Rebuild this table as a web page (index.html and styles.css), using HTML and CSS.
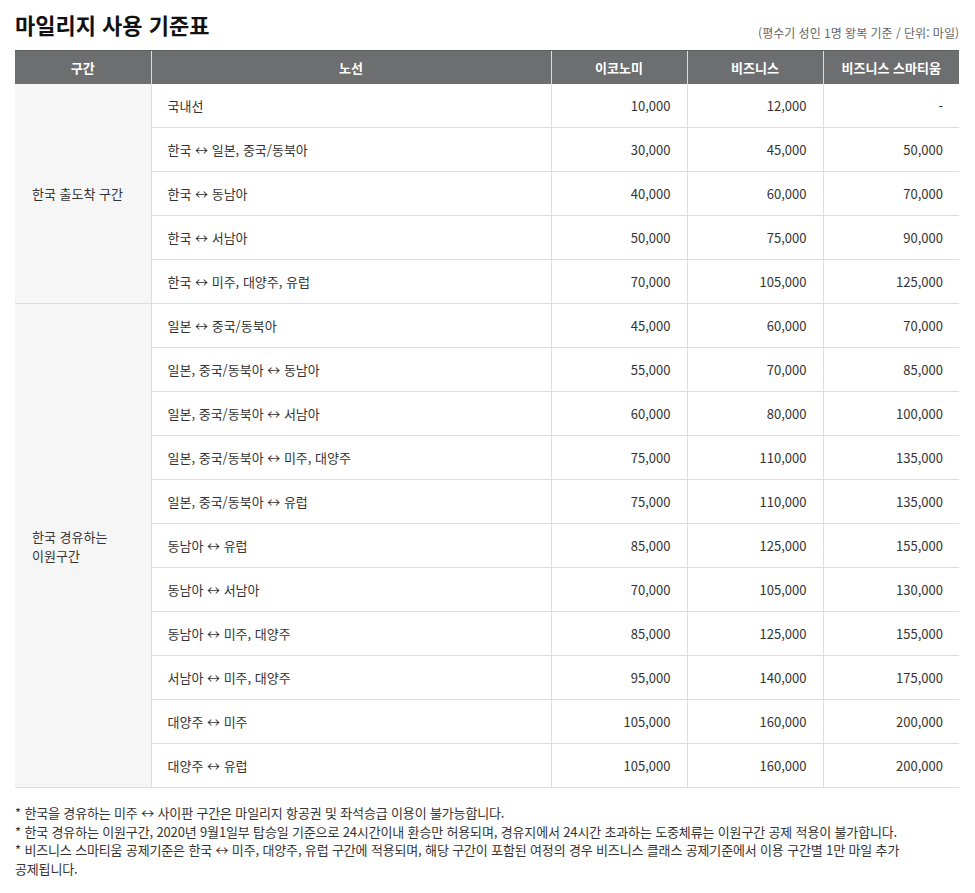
FILE: index.html
```html
<!DOCTYPE html>
<html lang="ko">
<head>
<meta charset="utf-8">
<link rel="stylesheet" href="styles.css">
</head>
<body>
<div class="page">
  <div class="head">
    <h1 class="title">마일리지 사용 기준표</h1>
    <span class="unit">(평수기 성인 1명 왕복 기준 / 단위: 마일)</span>
  </div>
  <table class="miles">
    <colgroup>
      <col class="c-sec"><col class="c-route"><col class="c-num"><col class="c-num"><col class="c-num">
    </colgroup>
    <thead>
      <tr><th>구간</th><th>노선</th><th>이코노미</th><th>비즈니스</th><th>비즈니스 스마티움</th></tr>
    </thead>
    <tbody>
      <tr><td class="sec" rowspan="5">한국 출도착 구간</td><td class="route">국내선</td><td class="num">10,000</td><td class="num">12,000</td><td class="num">-</td></tr>
      <tr><td class="route">한국 ↔ 일본, 중국/동북아</td><td class="num">30,000</td><td class="num">45,000</td><td class="num">50,000</td></tr>
      <tr><td class="route">한국 ↔ 동남아</td><td class="num">40,000</td><td class="num">60,000</td><td class="num">70,000</td></tr>
      <tr><td class="route">한국 ↔ 서남아</td><td class="num">50,000</td><td class="num">75,000</td><td class="num">90,000</td></tr>
      <tr><td class="route">한국 ↔ 미주, 대양주, 유럽</td><td class="num">70,000</td><td class="num">105,000</td><td class="num">125,000</td></tr>
      <tr><td class="sec" rowspan="11">한국 경유하는<br>이원구간</td><td class="route">일본 ↔ 중국/동북아</td><td class="num">45,000</td><td class="num">60,000</td><td class="num">70,000</td></tr>
      <tr><td class="route">일본, 중국/동북아 ↔ 동남아</td><td class="num">55,000</td><td class="num">70,000</td><td class="num">85,000</td></tr>
      <tr><td class="route">일본, 중국/동북아 ↔ 서남아</td><td class="num">60,000</td><td class="num">80,000</td><td class="num">100,000</td></tr>
      <tr><td class="route">일본, 중국/동북아 ↔ 미주, 대양주</td><td class="num">75,000</td><td class="num">110,000</td><td class="num">135,000</td></tr>
      <tr><td class="route">일본, 중국/동북아 ↔ 유럽</td><td class="num">75,000</td><td class="num">110,000</td><td class="num">135,000</td></tr>
      <tr><td class="route">동남아 ↔ 유럽</td><td class="num">85,000</td><td class="num">125,000</td><td class="num">155,000</td></tr>
      <tr><td class="route">동남아 ↔ 서남아</td><td class="num">70,000</td><td class="num">105,000</td><td class="num">130,000</td></tr>
      <tr><td class="route">동남아 ↔ 미주, 대양주</td><td class="num">85,000</td><td class="num">125,000</td><td class="num">155,000</td></tr>
      <tr><td class="route">서남아 ↔ 미주, 대양주</td><td class="num">95,000</td><td class="num">140,000</td><td class="num">175,000</td></tr>
      <tr><td class="route">대양주 ↔ 미주</td><td class="num">105,000</td><td class="num">160,000</td><td class="num">200,000</td></tr>
      <tr><td class="route">대양주 ↔ 유럽</td><td class="num">105,000</td><td class="num">160,000</td><td class="num">200,000</td></tr>
    </tbody>
  </table>
  <ul class="notes">
    <li>* 한국을 경유하는 미주 ↔ 사이판 구간은 마일리지 항공권 및 좌석승급 이용이 불가능합니다.</li>
    <li>* 한국 경유하는 이원구간, 2020년 9월1일부 탑승일 기준으로 24시간이내 환승만 허용되며, 경유지에서 24시간 초과하는 도중체류는 이원구간 공제 적용이 불가합니다.</li>
    <li>* 비즈니스 스마티움 공제기준은 한국 ↔ 미주, 대양주, 유럽 구간에 적용되며, 해당 구간이 포함된 여정의 경우 비즈니스 클래스 공제기준에서 이용 구간별 1만 마일 추가 공제됩니다.</li>
  </ul>
</div>
</body>
</html>
```
FILE: styles.css
```css
* { box-sizing: border-box; }
html, body { margin: 0; padding: 0; background: #fff; }
body {
  font-family: "Noto Sans CJK KR", "Noto Sans", sans-serif;
  color: #333;
  font-size: 13px;
}
.page { width: 944px; margin-left: 15px; }
.head {
  display: flex;
  justify-content: space-between;
  align-items: flex-end;
  height: 50px;
  padding-bottom: 11px;
}
.title {
  margin: 0;
  font-size: 22px;
  font-weight: 700;
  color: #111;
  letter-spacing: 0;
  line-height: 1;
  position: relative;
  top: -4px;
}
.unit {
  font-size: 12px;
  color: #666;
  line-height: 1;
  letter-spacing: 0;
}
.miles {
  width: 944px;
  border-collapse: collapse;
  table-layout: fixed;
}
.c-sec { width: 136px; }
.c-route { width: 400px; }
.c-num { width: 136px; }
.miles th {
  background: #6d6e70;
  color: #fff;
  font-weight: 700;
  font-size: 13px;
  height: 33px;
  padding: 0;
  text-align: center;
  border-left: 1px solid #ddd;
  border-top: 1px solid #5c5d5f;
}
.miles th:first-child { border-left: none; }
.miles td {
  height: 44px;
  padding: 0 16px;
  border-bottom: 1px solid #ddd;
  border-left: 1px solid #ddd;
  vertical-align: middle;
  line-height: 19px;
}
.miles td.sec {
  background: #f6f6f6;
  border-left: none;
  padding-left: 17px;
}
.miles td.route { padding-left: 16px; }
.miles td.num { text-align: right; }
.notes {
  list-style: none;
  margin: 16px 0 0;
  padding: 0;
  font-size: 13px;
  line-height: 18.5px;
  color: #333;
  letter-spacing: -0.15px;
  width: 910px;
  word-break: keep-all;
}
```
